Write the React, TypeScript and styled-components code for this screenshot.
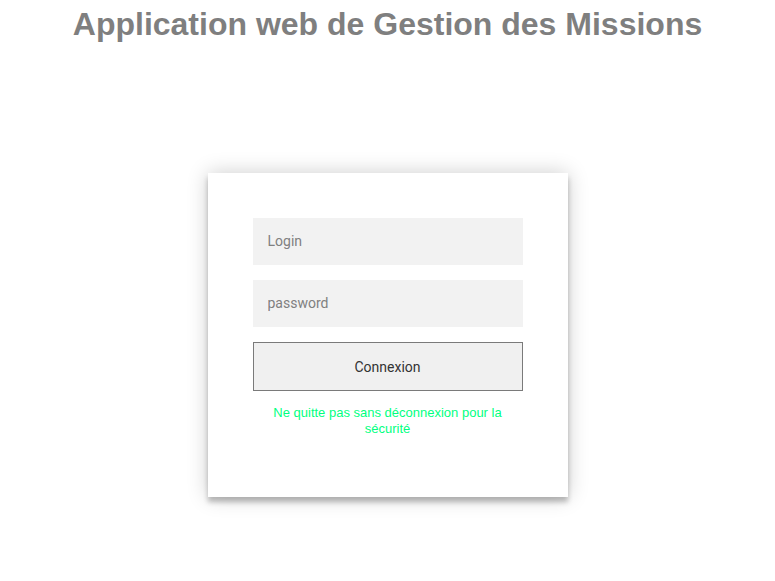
import React, { useState } from "react";
import styled, { createGlobalStyle } from "styled-components";

const GlobalStyle = createGlobalStyle`
  body {
    margin: 0;
    background: #fff;
    font-family: "Liberation Sans", Arial, sans-serif;
  }
`;

const Page = styled.div`
  display: flex;
  flex-direction: column;
  align-items: center;
  padding-bottom: 80px;
`;

const Title = styled.h1`
  margin: 4px 0 0;
  font-family: "Liberation Sans", Arial, sans-serif;
  font-size: 32px;
  font-weight: bold;
  color: #7f7f7f;
  text-align: center;
  line-height: 40px;
`;

const Card = styled.form`
  margin-top: 129px;
  width: 360px;
  box-sizing: border-box;
  padding: 45px;
  background: #fff;
  text-align: center;
  box-shadow: 0 0 20px 0 rgba(0, 0, 0, 0.2), 0 5px 5px 0 rgba(0, 0, 0, 0.24);
`;

const Field = styled.input`
  display: block;
  width: 100%;
  box-sizing: border-box;
  margin: 0 0 15px;
  padding: 15px;
  border: 0;
  outline: 0;
  background: #f2f2f2;
  font-family: Roboto, sans-serif;
  font-size: 14px;
  line-height: 17px;
  color: #333;

  &::placeholder {
    color: #808080;
  }
`;

const SubmitButton = styled.button`
  display: block;
  width: 100%;
  height: 49px;
  border: 1px solid #7a7a7a;
  background: #f0f0f0;
  font-family: Roboto, sans-serif;
  font-size: 14px;
  color: #333;
  cursor: pointer;
`;

const Message = styled.p`
  margin: 14px 0 15px;
  font-family: "Liberation Sans", Arial, sans-serif;
  font-size: 13px;
  line-height: 16px;
  color: #00ff7f;
`;

const App: React.FC = () => {
    const [login, setLogin] = useState("");
    const [password, setPassword] = useState("");

    const handleSubmit = (e: React.FormEvent<HTMLFormElement>) => {
        e.preventDefault();
    };

    return (
        <Page>
            <GlobalStyle />
            <Title>Application web de Gestion des Missions</Title>
            <Card onSubmit={handleSubmit}>
                <Field
                    type="text"
                    placeholder="Login"
                    value={login}
                    onChange={(e) => setLogin(e.target.value)}
                />
                <Field
                    type="password"
                    placeholder="password"
                    value={password}
                    onChange={(e) => setPassword(e.target.value)}
                />
                <SubmitButton type="submit">Connexion</SubmitButton>
                <Message>Ne quitte pas sans déconnexion pour la sécurité</Message>
            </Card>
        </Page>
    );
};

export default App;
